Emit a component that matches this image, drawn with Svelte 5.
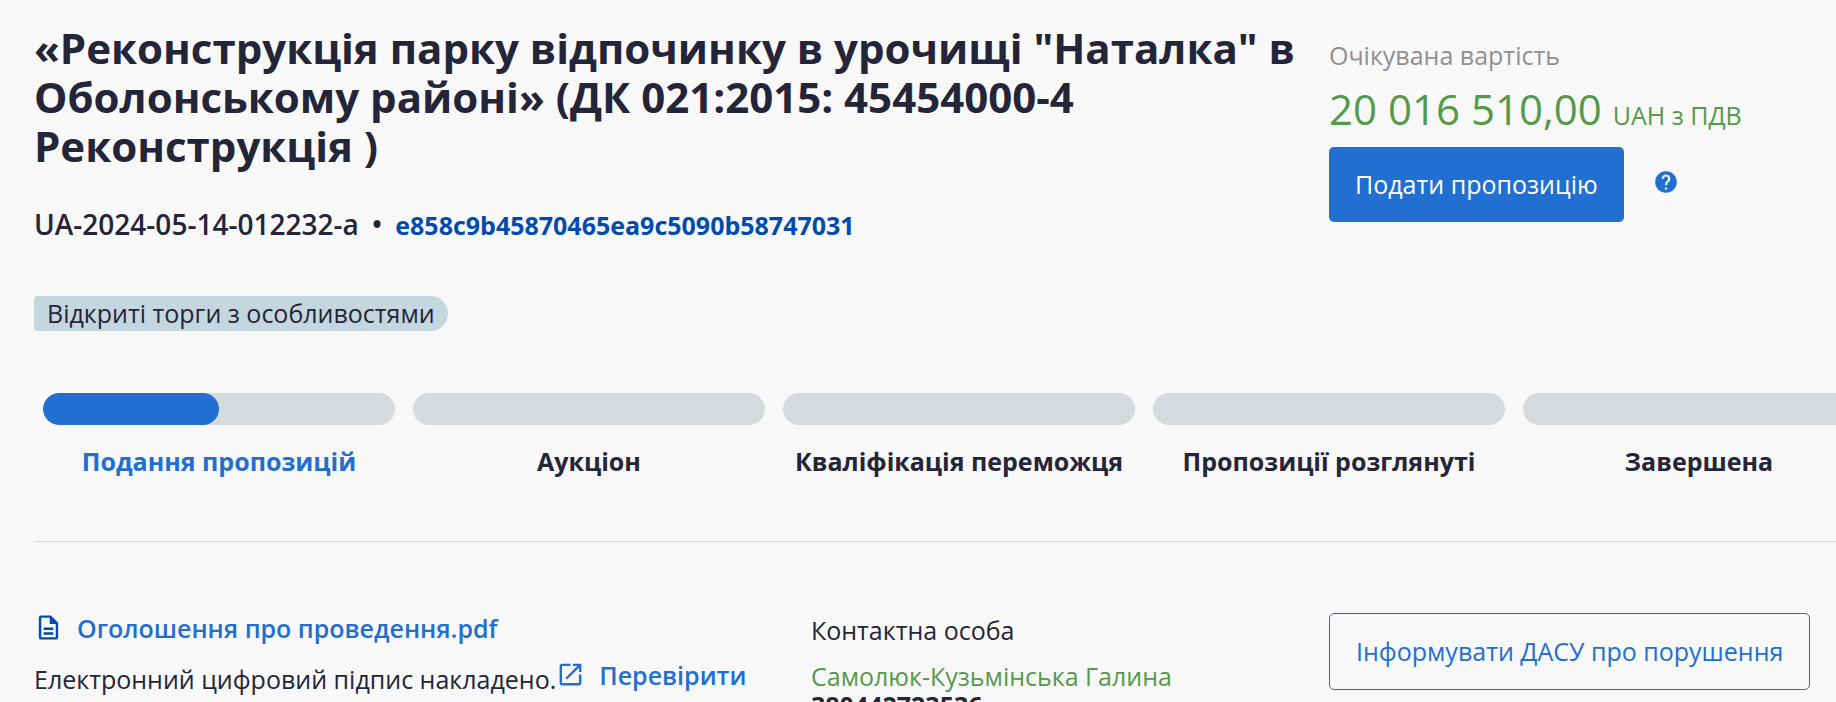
<script lang="ts">
	interface Stage {
		title: string;
		progress: number;
	}

	const stages: Stage[] = [
		{ title: 'Подання пропозицій', progress: 50 },
		{ title: 'Аукціон', progress: 0 },
		{ title: 'Кваліфікація переможця', progress: 0 },
		{ title: 'Пропозиції розглянуті', progress: 0 },
		{ title: 'Завершена', progress: 0 }
	];
</script>

<main class="page">
	<div class="container">
		<header class="columns">
			<div class="summary">
				<h1>
					«Реконструкція парку відпочинку в урочищі "Наталка" в Оболонському районі» (ДК 021:2015:
					45454000-4 Реконструкція )
				</h1>
				<div class="ids">
					<span class="tender-id">UA-2024-05-14-012232-a</span>
					<span class="dot">•</span>
					<a class="hash" href="#tender">e858c9b45870465ea9c5090b58747031</a>
				</div>
				<span class="tag">Відкриті торги з особливостями</span>
			</div>

			<div class="price">
				<div class="price-label">Очікувана вартість</div>
				<div class="amount">20 016 510,00 <span class="currency">UAH з ПДВ</span></div>
				<div class="actions">
					<button class="button primary" type="button">Подати пропозицію</button>
					<button class="help" type="button" aria-label="Довідка">
						<svg width="26" height="26" viewBox="0 0 24 24" fill="currentColor">
							<path
								d="M12 2C6.48 2 2 6.48 2 12s4.48 10 10 10 10-4.48 10-10S17.52 2 12 2zm1 17h-2v-2h2v2zm2.07-7.75l-.9.92C13.45 12.9 13 13.5 13 15h-2v-.5c0-1.1.45-2.1 1.17-2.83l1.24-1.26c.37-.36.59-.86.59-1.41 0-1.1-.9-2-2-2s-2 .9-2 2H8c0-2.21 1.79-4 4-4s4 1.79 4 4c0 .88-.36 1.68-.93 2.25z"
							/>
						</svg>
					</button>
				</div>
			</div>
		</header>

		<ol class="stages">
			{#each stages as stage}
				<li class="stage" class:active={stage.progress > 0}>
					<div class="bar">
						<div class="fill" style="width: {stage.progress}%"></div>
					</div>
					<div class="stage-title">{stage.title}</div>
				</li>
			{/each}
		</ol>

		<section class="columns details">
			<div class="documents">
				<a class="link" href="#announcement">
					<svg class="file-icon" width="29" height="29" viewBox="0 0 24 24" fill="currentColor">
						<path
							d="M8 16h8v2H8zm0-4h8v2H8zm6-10H6c-1.1 0-2 .9-2 2v16c0 1.1.89 2 1.99 2H18c1.1 0 2-.9 2-2V8l-6-6zm4 18H6V4h7v5h5v11z"
						/>
					</svg>
					Оголошення про проведення.pdf
				</a>
				<div class="signature">
					<span class="signature-text">Електронний цифровий підпис накладено.</span>
					<a class="link" href="#verify">
						<svg width="29" height="29" viewBox="0 0 24 24" fill="currentColor">
							<path
								d="M19 19H5V5h7V3H5c-1.11 0-2 .9-2 2v14c0 1.1.89 2 2 2h14c1.1 0 2-.9 2-2v-7h-2v7zM14 3v2h3.59l-9.83 9.83 1.41 1.41L19 6.41V10h2V3h-7z"
							/>
						</svg>
						Перевірити
					</a>
				</div>
			</div>

			<div class="contact">
				<div class="contact-label">Контактна особа</div>
				<div class="contact-name">Самолюк-Кузьмінська Галина</div>
				<div class="contact-phone">380442723536</div>
			</div>

			<div class="report">
				<button class="button outline" type="button">Інформувати ДАСУ про порушення</button>
			</div>
		</section>
	</div>
</main>

<style>
	:global(body) {
		margin: 0;
		background: #f8f8f8;
	}

	.page {
		height: 100vh;
		overflow: hidden;
		box-sizing: border-box;
		padding: 23px 0 0 34px;
		font-family: 'Open Sans', 'Noto Sans', sans-serif;
		font-size: 25px;
		line-height: 35px;
		color: #242538;
	}

	/* the content runs slightly past the right edge */
	.container {
		width: calc(100% + 48px);
	}

	.columns {
		display: grid;
		grid-template-columns: 42% 28% 30%;
	}

	.summary {
		grid-column: span 2;
		padding-right: 20px;
	}

	h1 {
		margin: 0;
		font-size: 42px;
		line-height: 49px;
		font-weight: 700;
	}

	.ids {
		display: flex;
		align-items: baseline;
		gap: 13px;
		margin-top: 37px;
	}

	.tender-id,
	.dot {
		font-size: 28px;
		font-weight: 600;
	}

	.hash {
		font-weight: 700;
		color: #004bad;
		text-decoration: none;
	}

	.tag {
		display: inline-block;
		margin-top: 53px;
		padding: 0 13px;
		border-radius: 4px 18px 18px 4px;
		background: #c4d7de;
	}

	.price {
		padding-top: 15px;
	}

	.price-label {
		color: #909090;
	}

	.amount {
		margin-top: 8px;
		font-size: 42px;
		line-height: 56px;
		color: #55994a;
	}

	.currency {
		font-size: 25px;
	}

	.actions {
		display: flex;
		align-items: center;
		gap: 29px;
		margin-top: 4px;
	}

	.button {
		padding: 20px 26px;
		border: 0;
		border-radius: 5px;
		font: inherit;
		white-space: nowrap;
		cursor: pointer;
	}

	.primary {
		background: #206fd1;
		color: #fff;
	}

	.outline {
		border: 1px solid #206fd1;
		background: transparent;
		color: #206fd1;
	}

	.help {
		display: flex;
		padding: 0 0 6px;
		border: 0;
		background: none;
		color: #206fd1;
		cursor: pointer;
	}

	.stages {
		display: grid;
		grid-template-columns: repeat(5, 1fr);
		margin: 0;
		padding: 62px 0;
		border-bottom: 1px solid #d6dadf;
		list-style: none;
	}

	.stage {
		padding: 0 9px;
		font-weight: 700;
		text-align: center;
	}

	.bar {
		height: 32px;
		border-radius: 16px;
		background: #d6dadf;
		overflow: hidden;
	}

	.fill {
		height: 100%;
		border-radius: 16px;
		background: #206fd1;
	}

	.stage-title {
		margin-top: 19px;
	}

	.active .stage-title {
		color: #206fd1;
	}

	.details {
		padding-top: 71px;
	}

	.link {
		display: inline-flex;
		align-items: center;
		gap: 14px;
		line-height: 28px;
		font-weight: 600;
		color: #206fd1;
		text-decoration: none;
	}

	.file-icon {
		color: #004bad;
	}

	.signature {
		display: flex;
		align-items: flex-start;
		margin-top: 10px;
	}

	.signature-text {
		padding-top: 2px;
	}

	.contact-name {
		margin-top: 13px;
		line-height: 30px;
		color: #55994a;
	}

	.contact-phone {
		line-height: 28px;
		font-weight: 700;
	}
</style>
